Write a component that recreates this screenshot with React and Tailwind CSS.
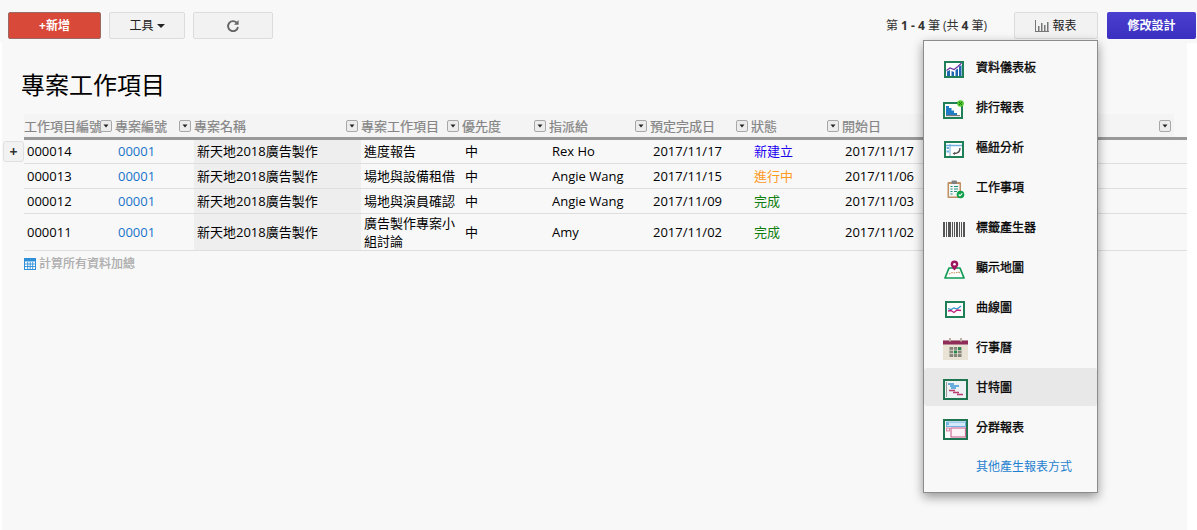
const FONT = "font-['Open_Sans','Noto_Sans_CJK_TC',sans-serif]";

function Filter() {
  return (
    <span className="flex w-[12px] h-[12px] items-center justify-center rounded-[2px] border border-[#a8a8a8] bg-[#ececec]">
      <svg width="6" height="4" viewBox="0 0 6 4"><path d="M0.5 0.5h5L3 3.5z" fill="#222" /></svg>
    </span>
  );
}

function Head({ label }) {
  return (
    <th className="p-0 bg-[#f4f4f4] border-b-[3px] border-[#999] font-normal text-left align-middle">
      <div className="flex items-center justify-between pr-[3px] pt-[2px] overflow-hidden whitespace-nowrap">
        <span className="text-[13px] text-[#858585] [-webkit-text-stroke:0.2px_#858585]">{label}</span>
        <span className="flex-none -ml-[2px]"><Filter /></span>
      </div>
    </th>
  );
}

const rows = [
  { id: "000014", name: "進度報告", who: "Rex Ho", due: "2017/11/17", st: "新建立", c: "text-[#1a00f0]", start: "2017/11/17", h: "h-[25px]" },
  { id: "000013", name: "場地與設備租借", who: "Angie Wang", due: "2017/11/15", st: "進行中", c: "text-[#ff9a1f]", start: "2017/11/06", h: "h-[25px]" },
  { id: "000012", name: "場地與演員確認", who: "Angie Wang", due: "2017/11/09", st: "完成", c: "text-[#0f7f0f]", start: "2017/11/03", h: "h-[25px]" },
  { id: "000011", name: "廣告製作專案小組討論", who: "Amy", due: "2017/11/02", st: "完成", c: "text-[#0f7f0f]", start: "2017/11/02", h: "h-[37px]" },
];

const icons = {
  dash: (
    <svg width="20" height="17" viewBox="0 0 20 17">
      <rect x="1" y="1" width="18" height="15" fill="#fff" stroke="#1f8058" strokeWidth="2" />
      <path d="M3 15V10.5L6 9V15zM7.5 15V10L10 11V15zM11.5 15V9L14 7.5V15zM15 15V5.5L17.5 4V15z" fill="#1f66b0" />
      <path d="M2.5 9.5L6 7l4 1.5 4-3L17.5 2" fill="none" stroke="#6a30a0" strokeWidth="1.2" />
    </svg>
  ),
  rank: (
    <svg width="22" height="19" viewBox="0 0 22 19">
      <rect x="1" y="3" width="18" height="15" fill="#fff" stroke="#1f8058" strokeWidth="2" />
      <path d="M3 6h3v2h2.5v2.5H11V13h3v2.5H3z" fill="#1f7cc5" />
      <rect x="3" y="15" width="14" height="1.2" fill="#777" />
      <circle cx="17.5" cy="3.5" r="3.3" fill="#4fc82c" />
      <path d="M16 2l3 3M19 2l-3 3" stroke="#1d6b1d" strokeWidth="0.9" />
    </svg>
  ),
  pivot: (
    <svg width="20" height="17" viewBox="0 0 20 17">
      <rect x="1" y="1" width="18" height="15" fill="#fff" stroke="#1f8058" strokeWidth="2" />
      <path d="M2 4.5h16" stroke="#6fb0e0" strokeWidth="1.5" />
      <path d="M6 3v12" stroke="#6fb0e0" strokeWidth="1" />
      <rect x="2.5" y="6" width="2.5" height="2" fill="#6fb0e0" />
      <rect x="2.5" y="9.5" width="2.5" height="2" fill="#6fb0e0" />
      <path d="M16 7c0 4-2 5.5-6 5.5" fill="none" stroke="#555" strokeWidth="1.4" />
      <path d="M11 11v3l-2.5-1.5z" fill="#555" />
    </svg>
  ),
  todo: (
    <svg width="18" height="19" viewBox="0 0 18 19" className="ml-[4px]">
      <rect x="0.5" y="2" width="13.5" height="16" rx="1" fill="#c08f62" />
      <rect x="2" y="4" width="10.5" height="12.5" fill="#f4f6f4" />
      <rect x="4.5" y="0.5" width="5.5" height="3.5" rx="1" fill="#808080" />
      <path d="M3.5 6.5h2M7 6.5h4M3.5 9h2M7 9h4M3.5 11.5h2M7 11.5h3M3.5 14h2" stroke="#1f8f80" strokeWidth="1.1" />
      <circle cx="13.5" cy="14.5" r="3.8" fill="#0ea048" />
      <path d="M11.7 14.5l1.3 1.3 2.3-2.4" fill="none" stroke="#fff" strokeWidth="1.1" />
    </svg>
  ),
  barcode: (
    <svg width="22" height="15" viewBox="0 0 22 15" fill="#555">
      <rect x="0" width="2" height="15" /><rect x="3" width="1" height="15" /><rect x="5" width="3" height="15" />
      <rect x="9" width="1" height="15" /><rect x="11" width="1" height="15" /><rect x="13" width="2" height="15" />
      <rect x="16" width="1" height="15" /><rect x="18" width="1" height="15" /><rect x="20" width="2" height="15" />
    </svg>
  ),
  map: (
    <svg width="21" height="19" viewBox="0 0 21 19">
      <path d="M5 8L1 18h19L16 8z" fill="#fff" stroke="#0f9a55" strokeWidth="1.7" strokeLinejoin="round" />
      <path d="M5 14l3-1.5 3 .5 3-1 3 1" fill="none" stroke="#c09060" strokeWidth="1.1" strokeDasharray="1.5 1" />
      <path d="M10.5 0.5a3.8 3.8 0 0 1 3.8 3.8c0 2.5-3.8 6.2-3.8 6.2S6.7 6.8 6.7 4.3A3.8 3.8 0 0 1 10.5 0.5z" fill="#a0155f" />
      <circle cx="10.5" cy="4.2" r="1.3" fill="#fff" />
    </svg>
  ),
  line: (
    <svg width="20" height="17" viewBox="0 0 20 17" className="ml-[2px]">
      <rect x="1" y="1" width="18" height="15" fill="#fff" stroke="#1f8058" strokeWidth="2" />
      <path d="M3 7.5l3 1 3-1.5 3 1 4-3" fill="none" stroke="#2f90d0" strokeWidth="1.2" />
      <path d="M3 10l3-.5 3 2 3-2.5 4 .5" fill="none" stroke="#c0207a" strokeWidth="1.3" />
    </svg>
  ),
  cal: (
    <svg width="25" height="22" viewBox="0 0 25 22" className="ml-[2px]">
      <rect x="0" y="2" width="25" height="20" fill="#e9e3d5" />
      <rect x="0" y="2.5" width="25" height="4" fill="#8e2c5a" />
      <rect x="6" y="0" width="2" height="3.5" fill="#b9b2a2" /><rect x="17" y="0" width="2" height="3.5" fill="#b9b2a2" />
      <rect x="6.5" y="9" width="12" height="10" fill="#84847a" />
      <path d="M10.5 9v10M14.5 9v10M6.5 12.3h12M6.5 15.6h12" stroke="#e9e3d5" strokeWidth="0.8" />
      <rect x="11" y="12.7" width="3" height="2.6" fill="#1f8a4c" /><rect x="15" y="9.4" width="3" height="2.6" fill="#1f8a4c" />
    </svg>
  ),
  gantt: (
    <svg width="25" height="21" viewBox="0 0 25 21" className="ml-[2px]">
      <rect x="1" y="1" width="23" height="19" fill="#eef2f4" stroke="#1f7550" strokeWidth="2" />
      <path d="M5 5h6M7 7h9M8 9h5" stroke="#3c97d6" strokeWidth="1.4" />
      <path d="M6 11.5h6M10 13.5h6M14 15.5h6" stroke="#b83c70" strokeWidth="1.4" />
      <path d="M3.5 3v15" stroke="#999" strokeWidth="1" />
    </svg>
  ),
  group: (
    <svg width="25" height="21" viewBox="0 0 25 21" className="ml-[2px]">
      <rect x="1" y="1" width="23" height="19" fill="#fff" stroke="#1f7550" strokeWidth="2" />
      <rect x="3.5" y="3" width="19" height="4.5" fill="#d4eafa" stroke="#6fb0e0" strokeWidth="1" />
      <rect x="3.5" y="3.5" width="2.5" height="2.5" fill="#6fb0e0" />
      <rect x="8" y="9" width="14.5" height="9" fill="#fdf2f6" stroke="#cc6f98" strokeWidth="1.2" />
      <rect x="3.5" y="9" width="3" height="3" fill="#fbe3ec" stroke="#cc6f98" strokeWidth="0.8" />
    </svg>
  ),
};

const menu = [
  ["資料儀表板", "dash"], ["排行報表", "rank"], ["樞紐分析", "pivot"], ["工作事項", "todo"], ["標籤產生器", "barcode"],
  ["顯示地圖", "map"], ["曲線圖", "line"], ["行事曆", "cal"], ["甘特圖", "gantt"], ["分群報表", "group"],
];

function Menu() {
  return (
    <div className="absolute left-[923px] top-[40px] w-[175px] h-[453px] z-10 bg-[#f8f8f8] border border-[#8c8c8c] shadow-[0_4px_10px_rgba(0,0,0,0.4)] pt-[7px]">
      {menu.map(([t, k]) => (
        <div key={t} className={`flex items-center h-[38px] mb-[2px] rounded-[3px] ${k === "gantt" ? "bg-[#e8e8e8]" : ""}`}>
          <span className="w-[52px] flex-none flex justify-center pl-[8px] mt-[4px]">{icons[k]}</span>
          <span className="text-[12px] text-black [-webkit-text-stroke:0.3px_#000] mt-[2px]">{t}</span>
        </div>
      ))}
      <div className="flex items-center h-[38px] pl-[52px]">
        <span className="text-[12px] text-[#1f7fcf]">其他產生報表方式</span>
      </div>
    </div>
  );
}

const cell = "px-0 pb-0 pt-[2px] pl-[3px]";

export default function App() {
  return (
    <div className={`relative w-[1197px] h-[530px] overflow-hidden bg-white ${FONT}`}>
      <div className="flex items-start bg-[#f8f8f8] h-[43px] pl-[8px] pr-px pt-[12px]">
        <button className="w-[93px] h-[27px] rounded-[2px] border border-[#9a6a62] bg-[#d9493a] text-white text-[12px] font-bold">+新增</button>
        <button className="ml-[8px] w-[76px] h-[27px] rounded-[2px] border border-[#dcdcdc] bg-[#f2f2f2] text-[12px] text-[#222] flex items-center justify-center gap-[3px]">
          工具
          <svg width="8" height="4" viewBox="0 0 8 4"><path d="M0 0h8L4 4z" fill="#222" /></svg>
        </button>
        <button className="ml-[8px] w-[80px] h-[27px] rounded-[2px] border border-[#dcdcdc] bg-[#f2f2f2] flex items-center justify-center">
          <svg width="14" height="14" viewBox="0 0 14 14" fill="none">
            <path d="M11.2 4.3A5 5 0 1 0 12 8" stroke="#666" strokeWidth="1.9" />
            <path d="M12.6 1v4.8H8z" fill="#666" />
          </svg>
        </button>
        <div className="ml-auto mr-[27px] h-[27px] flex items-center text-[12px] text-[#333] gap-[3px] whitespace-nowrap">
          <span>第</span><b>1 - 4</b><span>筆 (共</span><b>4</b><span>筆)</span>
        </div>
        <button className="w-[84px] h-[27px] rounded-[2px] border border-[#dcdcdc] bg-[#f2f2f2] text-[12px] text-[#222] flex items-center justify-center gap-[3px]">
          <svg width="14" height="12" viewBox="0 0 14 12" fill="#777"><path d="M0 0h1v11h13v1H0zM3 6h1.5v5H3zM6 3h1.5v8H6zM9 5h1.5v6H9zM12 2h1.5v9H12z" /></svg>
          報表
        </button>
        <button className="ml-[9px] w-[89px] h-[27px] rounded-[2px] bg-gradient-to-b from-[#4a3fcf] to-[#3a2fc0] text-white text-[12px] font-bold">修改設計</button>
      </div>
      <div className="ml-[2px] mr-[10px] h-[487px] bg-[#f8f8f8] pl-[20px] pt-[26px]">
        <h1 className="text-[24px] leading-[32px] font-normal text-black mb-[13px] -ml-px">專案工作項目</h1>
        <div className="ml-[2px] w-[1163px] relative">
          <table className="table-fixed border-collapse w-full">
            <colgroup>
              <col className="w-[91px]" /><col className="w-[79px]" /><col className="w-[167px]" /><col className="w-[101px]" />
              <col className="w-[87px]" /><col className="w-[101px]" /><col className="w-[101px]" /><col className="w-[91px]" />
              <col className="w-[332px]" /><col className="w-[13px]" />
            </colgroup>
            <thead>
              <tr className="h-[24px]">
                {["工作項目編號", "專案編號", "專案名稱", "專案工作項目", "優先度", "指派給", "預定完成日", "狀態", "開始日"].map((h) => (
                  <Head key={h} label={h} />
                ))}
                <th className="p-0 border-b-[3px] border-[#999]" />
              </tr>
            </thead>
            <tbody className="text-[13px] text-black">
              {rows.map((r) => (
                <tr key={r.id} className={`${r.h} border-b border-[#dedede]`}>
                  <td className={cell}>{r.id}</td>
                  <td className={`${cell} text-[#1a73c8]`}>00001</td>
                  <td className={`${cell} bg-[#eeeeee]`}>新天地2018廣告製作</td>
                  <td className="py-0 pl-[3px] pr-[6px] leading-[18px]">{r.name}</td>
                  <td className={cell}>中</td>
                  <td className={cell}>{r.who}</td>
                  <td className={cell}>{r.due}</td>
                  <td className={`${cell} ${r.c}`}>{r.st}</td>
                  <td className={cell} colSpan={2}>{r.start}</td>
                </tr>
              ))}
            </tbody>
          </table>
          <button className="absolute left-[-21px] top-[27px] w-[21px] h-[21px] rounded-[3px] border border-[#e0e0e0] bg-[#f2f2f2] text-[14px] leading-none font-bold text-[#333] flex items-center justify-center">+</button>
          <div className="flex items-center gap-[3px] mt-[4px] text-[12px] text-[#a8a8a8] [-webkit-text-stroke:0.2px_#a8a8a8]">
            <svg width="12" height="12" viewBox="0 0 12 12">
              <rect x="0.5" y="0.5" width="11" height="11" fill="#fff" stroke="#2f8fd8" />
              <rect x="0.5" y="0.5" width="11" height="3" fill="#2f8fd8" />
              <path d="M1 6h10M1 8.5h10M3.7 4v7M6.2 4v7M8.7 4v7" stroke="#2f8fd8" strokeWidth="0.9" />
            </svg>
            計算所有資料加總
          </div>
        </div>
      </div>
      <Menu />
    </div>
  );
}
